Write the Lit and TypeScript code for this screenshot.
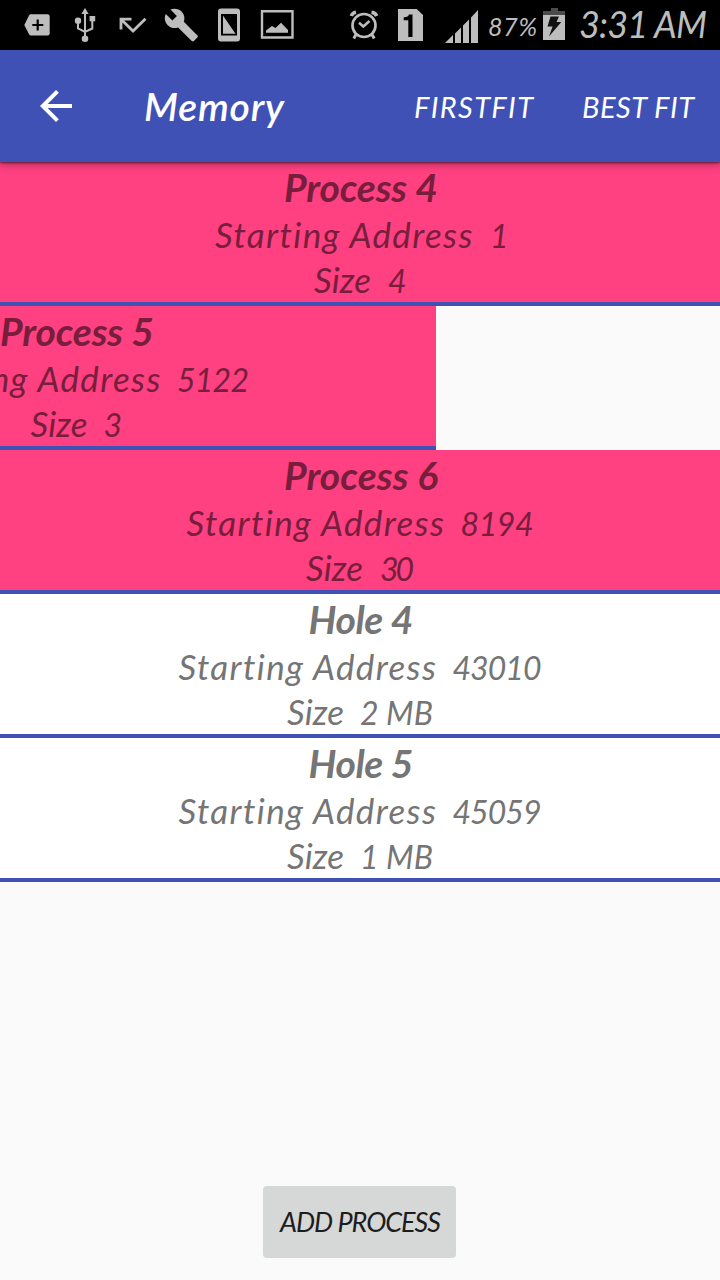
import { LitElement, html, css, svg } from "lit";
import { customElement, property } from "lit/decorators.js";

/** A run of text tracked so that it spans a fixed measure. */
@customElement("fit-text")
class FitText extends LitElement {
  @property({ type: Number }) measure = 100;
  @property() text = "";

  static styles = css`
    :host { display: inline-block; white-space: pre; }
    .run { display: inline-block; }
  `;

  render() {
    return html`<span class="run">${this.text}</span>`;
  }

  updated() {
    const run = this.renderRoot.querySelector(".run") as HTMLElement;
    this.style.width = `${this.measure}px`;
    run.style.letterSpacing = "0px";
    const n = this.text.length;
    if (n > 1) {
      const s = (this.measure - run.getBoundingClientRect().width) / (n - 1);
      run.style.letterSpacing = `${s}px`;
      run.style.marginRight = `${-s - 2}px`;
    }
  }
}

interface Block {
  name: string; nameW: number;
  addr: string; addrW: number; addrGap: number;
  size: string; sizeW: number; sizeGap: number;
  hole?: boolean; swipe?: number;
}

const blocks: Block[] = [
  { name: "Process 4", nameW: 154, addr: "1", addrW: 15, addrGap: 18, size: "4", sizeW: 18, sizeGap: 17 },
  { name: "Process 5", nameW: 154, addr: "5122", addrW: 72, addrGap: 17, size: "3", sizeW: 18, sizeGap: 16, swipe: 284 },
  { name: "Process 6", nameW: 154, addr: "8194", addrW: 73, addrGap: 17, size: "30", sizeW: 34, sizeGap: 17 },
  { name: "Hole 4", nameW: 105, addr: "43010", addrW: 89, addrGap: 17, size: "2 MB", sizeW: 73, sizeGap: 16, hole: true },
  { name: "Hole 5", nameW: 105, addr: "45059", addrW: 89, addrGap: 17, size: "1 MB", sizeW: 73, sizeGap: 16, hole: true },
];

const cell = (x: number, w: number, art: unknown) =>
  html`<svg width=${w} height="50" viewBox="${x} 0 ${w} 50">${art}</svg>`;

@customElement("app-root")
class AppRoot extends LitElement {
  static styles = css`
    :host {
      display: flex; flex-direction: column; width: 720px; height: 1280px;
      overflow: hidden; background: #fafafa;
      font-family: Lato, "Open Sans", sans-serif; font-style: italic;
    }
    svg { display: block; flex: none; }
    .status { display: flex; height: 50px; background: #000; color: #bdbdbd; flex: none; }
    .pct { font-size: 25px; line-height: 52px; width: 55px; flex: none; }
    .clock { font-size: 36px; line-height: 48px; margin-left: 8px; }
    .bar {
      display: flex; align-items: center; height: 112px; flex: none; background: #3f51b5;
      color: #fff; box-shadow: 0 1px 2px rgba(0,0,0,.5), 0 3px 7px rgba(0,0,0,.28);
      z-index: 1; box-sizing: border-box; padding: 0 26px 0 32px;
    }
    .title { font-size: 39px; line-height: 112px; font-weight: 600; margin-left: 64px; margin-right: auto; }
    .action { font-size: 29px; line-height: 112px; padding-top: 2px; margin-left: 49px; }
    .list { flex: none; }
    .block {
      box-sizing: border-box; width: 720px; height: 144px; border-bottom: 4px solid #3f51b5;
      background: #ff4081; color: #771e3c; text-align: center; padding-top: 2px;
    }
    .hole { background: #fff; color: #757575; }
    .name { font-size: 39px; line-height: 46px; font-weight: 700; margin-bottom: 2px; }
    .line { display: flex; justify-content: center; align-items: baseline; height: 45px; font-size: 35px; line-height: 45px; }
    .line fit-text { flex: none; text-align: left; }
    .line .value { font-size: 32px; }
    .foot { margin-top: auto; display: flex; justify-content: center; padding: 0 1px 22px 0; }
    .add {
      width: 193px; height: 72px; border: 0; border-radius: 4px; background: #d6d7d7;
      color: #1d1d1d; font: inherit; font-size: 27px; line-height: 72px; padding: 0; text-align: center;
    }
  `;

  private row(b: Block) {
    return html`<div class="block ${b.hole ? "hole" : ""}" style="margin-left:${-(b.swipe ?? 0)}px">
      <div class="name"><fit-text .measure=${b.nameW} .text=${b.name}></fit-text></div>
      <div class="line" style="gap:${b.addrGap}px">
        <fit-text .measure=${257} .text=${"Starting Address"}></fit-text>
        <fit-text class="value" .measure=${b.addrW} .text=${b.addr}></fit-text>
      </div>
      <div class="line" style="gap:${b.sizeGap}px">
        <fit-text .measure=${57} .text=${"Size"}></fit-text>
        <fit-text class="value" .measure=${b.sizeW} .text=${b.size}></fit-text>
      </div>
    </div>`;
  }

  render() {
    const c = "#bdbdbd";
    return html`
      <div class="status">
        ${cell(0, 60, svg`<path fill=${c} d="M31 14.3H47.5Q49.7 14.3 49.7 16.5V33.3Q49.7 35.5 47.5 35.5H31Q29.7 35.5 29 34.3L24.3 25L29 15.5Q29.7 14.3 31 14.3Z"/><path d="M37.7 19.5V30.5M32.3 25H43.3" stroke="#000" stroke-width="2.2"/>`)}
        ${cell(60, 48, svg`<g fill="none" stroke=${c} stroke-width="2"><path d="M85 13V38M78 21V28.5L85 32L92.3 28.5V19"/></g><g fill=${c}><path d="M85 8L88.7 14H81.3Z"/><circle cx="78" cy="20.8" r="3.2"/><path d="M89.6 16H95.2V21.3H89.6Z"/><circle cx="85" cy="38.7" r="3.3"/></g>`)}
        ${cell(108, 48, svg`<path d="M121 29.5V19.2H131.5M121.5 19.7L133 31L145.500 18.7" fill="none" stroke=${c} stroke-width="2.8"/>`)}
        ${cell(156, 52, svg`<path fill=${c} transform="translate(163.4 7) scale(1.5)" d="M22.7 19l-9.1-9.1c.9-2.3.4-5-1.5-6.9-2-2-5-2.4-7.4-1.3L9 6 6 9 1.6 4.7C.4 7.1.9 10.1 2.9 12.1c1.9 1.9 4.6 2.4 6.900 1.500l9.100 9.100c.4.4 1 .4 1.400 0l2.300-2.300c.5-.4.5-1.100.1-1.400z"/>`)}
        ${cell(208, 42, svg`<rect x="218" y="8.5" width="22" height="33" rx="3" fill=${c}/><path d="M221 14H237V35.5H221Z" fill="#000"/><path d="M223 15.5L235.500 33.700H223Z" fill=${c}/>`)}
        ${cell(250, 90, svg`<path d="M262 11.2H292.5V37.5H262Z" fill="none" stroke=${c} stroke-width="2.4"/><path fill=${c} d="M266 32.7V30.5L272 26L275.5 28L281 22.7L288 30V32.7Z"/>`)}
        ${cell(340, 50, svg`<g fill="none" stroke=${c}><circle cx="364" cy="25.5" r="11.5" stroke-width="2.7"/><path d="M359 22.8L363.3 26.5L369.5 21" stroke-width="2.5"/><path d="M351.3 16Q352.3 12.8 356 12.2M371.5 12.2Q375.5 12.8 376.7 16" stroke-width="3.6"/><path d="M356 34.5L353.8 38.5M372 34.5L374.2 38.5" stroke-width="3"/></g>`)}
        ${cell(390, 46, svg`<path fill=${c} d="M398 9H416.7L423 15V41H398Z"/><path fill="#000" d="M409 14.5H412.5V37H408.3V20.3H403.7V17.2Q408 17.5 409 14.5Z"/>`)}
        ${cell(436, 52, svg`<path fill=${c} d="M445 43L453 35V43ZM455 33.5L461 27.5V43H455ZM463 25.5L469 19.5V43H463ZM471 17.5L478 10V43H471Z"/>`)}
        <div class="pct"><fit-text .measure=${49} .text=${"87%"}></fit-text></div>
        ${cell(543, 28, svg`<path fill="#4b4b4b" d="M543 11H551V8H558V11H565V15H543Z"/><path fill=${c} d="M543 15H565V40H543Z"/><path fill="#111" d="M550.5 16.5H559L556.5 22H561.3L549 36.5L552.6 26.5H547.5Z"/>`)}
        <div class="clock"><fit-text .measure=${128} .text=${"3:31 AM"}></fit-text></div>
      </div>
      <div class="bar">
        <svg width="48" height="48" viewBox="0 0 24 24"><path fill="#fff" d="M20 11H7.83l5.59-5.59L12 4l-8 8 8 8 1.41-1.41L7.83 13H20v-2z"/></svg>
        <div class="title"><fit-text .measure=${140} .text=${"Memory"}></fit-text></div>
        <div class="action"><fit-text .measure=${119} .text=${"FIRSTFIT"}></fit-text></div>
        <div class="action"><fit-text .measure=${112} .text=${"BEST FIT"}></fit-text></div>
      </div>
      <div class="list">${blocks.map((b) => this.row(b))}</div>
      <div class="foot"><button class="add"><fit-text .measure=${161} .text=${"ADD PROCESS"}></fit-text></button></div>
    `;
  }
}
